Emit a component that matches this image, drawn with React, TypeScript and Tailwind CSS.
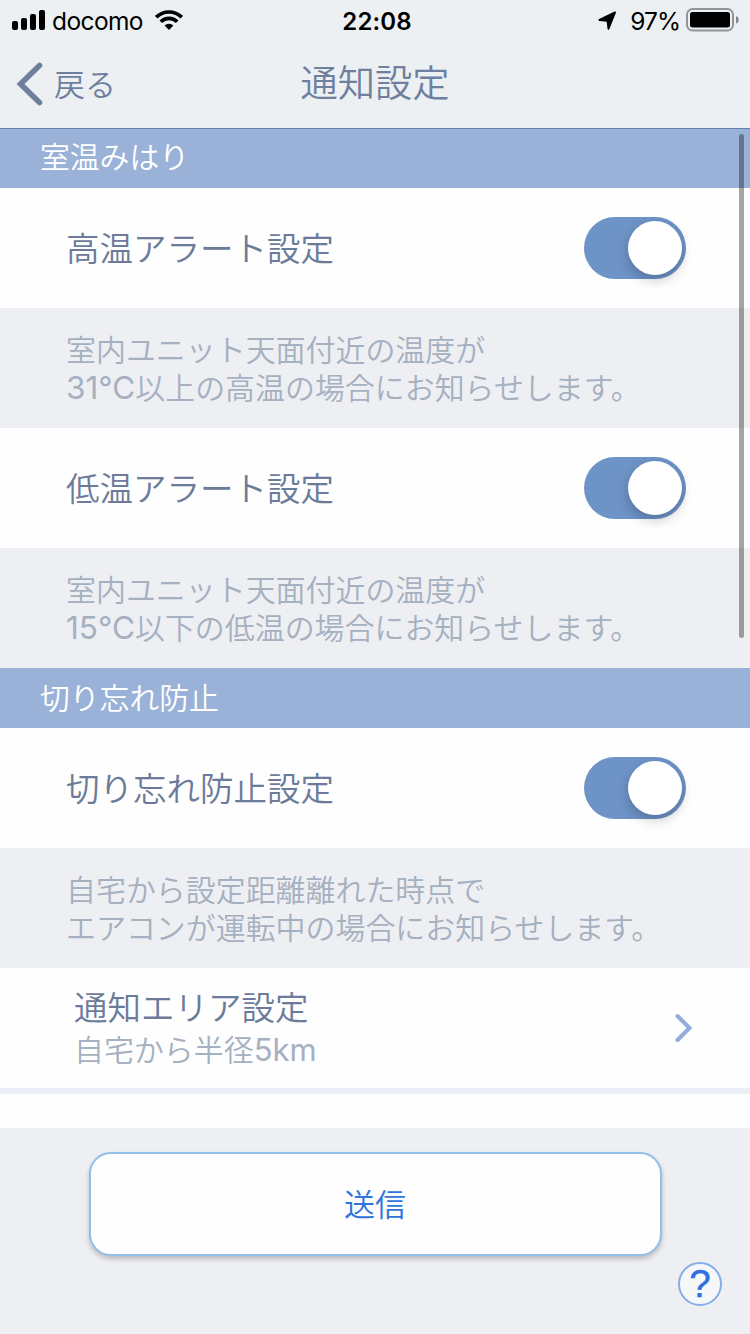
import React, { useState } from 'react';

type ToggleProps = {
  label: string;
  checked: boolean;
  onChange: () => void;
};

const Toggle: React.FC<ToggleProps> = ({ label, checked, onChange }) => (
  <button
    role="switch"
    aria-checked={checked}
    aria-label={label}
    onClick={onChange}
    className={`flex h-[62px] w-[102px] items-center rounded-full px-1 ${
      checked ? 'justify-end bg-[#6e93c7]' : 'justify-start bg-gray-300'
    }`}
  >
    <span className="size-[54px] rounded-full bg-white shadow-[0_5px_12px_rgba(0,0,0,0.22)]" />
  </button>
);

const SectionHeader: React.FC<{ title: string; first?: boolean }> = ({ title, first }) => (
  <h2
    className={`bg-[#9ab2d8] pl-10 text-[29.8px] text-white ${
      first ? 'h-[59px] leading-[56px]' : 'h-[60px] leading-[60px]'
    }`}
  >
    {title}
  </h2>
);

const SettingRow: React.FC<{ label: string }> = ({ label }) => {
  const [enabled, setEnabled] = useState(true);

  return (
    <div className="flex h-[120px] items-center justify-between bg-[#fefefe] pr-16 pl-[66px]">
      <span className="pt-[2px] text-[33.5px] leading-[60px] text-[#6b7b99]">{label}</span>
      <Toggle label={label} checked={enabled} onChange={() => setEnabled(!enabled)} />
    </div>
  );
};

type DescriptionProps = {
  first: string;
  temperature?: string;
  second: string;
};

const Description: React.FC<DescriptionProps> = ({ first, temperature, second }) => (
  <div className="h-[120px] bg-[#eeeff3] pt-[23px] pl-[66px] text-[29.95px] leading-[38px] whitespace-nowrap text-[#a5b0c0]">
    <p>{first}</p>
    <p>
      {temperature && <span className="text-[31.5px] font-normal">{temperature}</span>}
      {second}
    </p>
  </div>
);

const StatusBar = () => (
  <div className="flex h-10 items-center justify-between pr-[11px] pl-3 text-black">
    <div className="flex w-[300px] items-center">
      <svg width="34" height="20" viewBox="0 0 34 20">
        <rect x="0" y="11" width="6" height="9" rx="2" />
        <rect x="9" y="8" width="6" height="12" rx="2" />
        <rect x="18" y="4" width="6" height="16" rx="2" />
        <rect x="27" y="0" width="6" height="20" rx="2" />
      </svg>
      <span className="ml-[6px] pt-px text-[24.5px] leading-10 tracking-[-0.6px]">docomo</span>
      <svg width="28" height="20" viewBox="0 0 28 20" className="ml-3">
        <g fill="none" stroke="#000" strokeWidth="3.7">
          <path d="M1.2 7.2a18.3 18.3 0 0 1 25.6 0" />
          <path d="M5.8 11.8a11.7 11.7 0 0 1 16.4 0" />
        </g>
        <path d="M14 20l-4.4-4.5a6.3 6.3 0 0 1 8.8 0z" />
      </svg>
    </div>
    <span className="pt-[3px] pl-[3px] text-[24px] leading-10 font-semibold tracking-[0.1px]">22:08</span>
    <div className="flex w-[300px] items-center justify-end">
      <svg width="19" height="19" viewBox="0 0 19 19" className="mt-px">
        <path d="M17 1.5L1.5 9l7.300.8.9.9.8 7z" stroke="#000" strokeWidth="2" strokeLinejoin="round" />
      </svg>
      <span className="ml-[13px] pt-px text-[24.5px] leading-10 tracking-[-1px]">97%</span>
      <svg width="53" height="24" viewBox="0 0 53 24" className="ml-[6px]">
        <rect x="1" y="1" width="46" height="21.5" rx="5.5" fill="none" stroke="#929598" strokeWidth="2" />
        <rect x="4" y="4" width="40" height="15.5" rx="2.5" />
        <path d="M50 8c3.8 1.3 3.8 6.3 0 7.6z" fill="#85888b" />
      </svg>
    </div>
  </div>
);

export default function App() {
  return (
    <div className="relative flex h-[1334px] w-[750px] flex-col overflow-hidden bg-[#eeeff3] font-['Inter','Noto_Sans_CJK_JP',sans-serif] font-[350]">
      <header className="h-[129px] border-b border-[#6180ae] bg-[#edf0f3] font-normal">
        <StatusBar />
        <div className="grid h-[88px] grid-cols-3 items-center font-[350] text-[#6f7f9e]">
          <button className="flex items-center pl-4 text-[31px] leading-[60px]">
            <svg width="28" height="44" viewBox="0 0 28 44" fill="none" stroke="#6f7f9e" strokeWidth="5.5" strokeLinecap="round">
              <path d="M23.5 3.5L4.5 22l19 18.5" />
            </svg>
            <span className="ml-[10px] pt-px">戻る</span>
          </button>
          <h1 className="text-center text-[37.3px] leading-[60px]">通知設定</h1>
        </div>
      </header>

      <main className="h-[999px] bg-[#fefefe]">
        <SectionHeader title="室温みはり" first />
        <SettingRow label="高温アラート設定" />
        <Description
          first="室内ユニット天面付近の温度が"
          temperature="31°C"
          second="以上の高温の場合にお知らせします。"
        />
        <SettingRow label="低温アラート設定" />
        <Description
          first="室内ユニット天面付近の温度が"
          temperature="15°C"
          second="以下の低温の場合にお知らせします。"
        />

        <SectionHeader title="切り忘れ防止" />
        <SettingRow label="切り忘れ防止設定" />
        <Description first="自宅から設定距離離れた時点で" second="エアコンが運転中の場合にお知らせします。" />
        <button className="flex h-[126px] w-full items-center justify-between border-b-[6px] border-[#ebeff6] pr-[56px] pl-[74px] text-left">
          <span className="flex flex-col pb-[2px]">
            <span className="text-[33.5px] leading-[46px] text-[#6b7b99]">通知エリア設定</span>
            <span className="-mt-px text-[29.95px] leading-[40px] text-[#a5b0c0]">
              自宅から半径<span className="text-[31px] font-normal">5km</span>
            </span>
          </span>
          <svg width="20" height="30" viewBox="0 0 20 30" fill="none" stroke="#90aedb" strokeWidth="4" strokeLinecap="round">
            <path d="M3.5 3L15.5 15 3.5 27" />
          </svg>
        </button>
      </main>

      <footer className="flex h-[206px] flex-col items-center bg-[#eeeff3] pt-6">
        <button className="h-[104px] w-[573px] rounded-[22px] border-2 border-[#92bfe9] bg-[#fefefe] pt-[2px] text-[31px] leading-[60px] text-[#2f75dc] shadow-[0_3px_5px_rgba(0,0,0,0.22)]">
          送信
        </button>
        <button
          aria-label="ヘルプ"
          className="mt-[6px] mr-7 flex size-11 items-center justify-center self-end rounded-full border-2 border-[#84aee8] bg-[#f5f7f9] font-['Liberation_Sans',sans-serif] text-[38px] leading-none font-normal text-[#2f70df] [-webkit-text-stroke:0.5px_#2f70df]"
        >
          ?
        </button>
      </footer>

      {/* scroll indicator */}
      <div className="absolute top-[134px] right-[6px] h-[504px] w-[5px] rounded-full bg-black/35" />
    </div>
  );
}
